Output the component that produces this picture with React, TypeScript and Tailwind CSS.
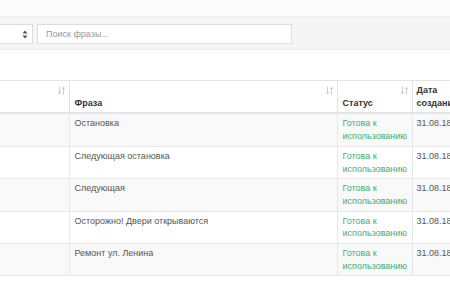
const phrases = [
  "Остановка",
  "Следующая остановка",
  "Следующая",
  "Осторожно! Двери открываются",
  "Ремонт ул. Ленина",
]

const SortIcon = () => (
  <svg width="7" height="9" viewBox="0 0 7 9" className="absolute right-[4px] top-[5px]">
    <path d="M1.5 0.5v7M0 6l1.5 2 1.5-2" stroke="#cfcfcf" strokeWidth="1" fill="none" />
    <path d="M5.5 8.5v-7M4 3l1.5-2 1.5 2" stroke="#cfcfcf" strokeWidth="1" fill="none" />
  </svg>
)

const App = () => {
  return (
    <div
      className="w-[450px] h-[300px] overflow-hidden bg-white text-[9px] leading-[12.7px] text-[#555]"
      style={{ fontFamily: "'Liberation Sans', Arial, sans-serif" }}
    >
      <div className="h-[17px] bg-[#fbfbfb] border-b border-[#eeeeee]" />
      <div className="h-[33px] bg-[#f5f5f5] border-b border-[#ebebeb] flex items-start pt-[7px] gap-[4px]">
        <div className="w-[33px] h-[20px] bg-white border border-[#dddddd] border-l-0 flex items-center justify-end pr-[4px]">
          <svg width="6" height="9" viewBox="0 0 6 9">
            <path d="M3 0.5L5.5 3.5H0.5Z M3 8.5L5.5 5.5H0.5Z" fill="#555" />
          </svg>
        </div>
        <div className="w-[255px] h-[20px] bg-white border border-[#dddddd] flex items-center pl-[8px] text-[#999]">
          Поиск фразы...
        </div>
      </div>

      <div className="h-[30px]" />

      <div className="w-[450px] overflow-hidden">
        <table className="table-fixed border-collapse w-[470px]">
          <colgroup>
            <col className="w-[69px]" />
            <col className="w-[268px]" />
            <col className="w-[75px]" />
            <col className="w-[58px]" />
          </colgroup>
          <thead>
            <tr className="text-[#333] font-bold text-left align-bottom">
              <th className="relative border-t border-r border-b-2 border-[#e3e3e3] px-[5px] pt-[3px] pb-[3px]">
                <SortIcon />
              </th>
              <th className="relative border-t border-x border-b-2 border-[#e3e3e3] px-[5px] pt-[3px] pb-[3px]">
                Фраза
                <SortIcon />
              </th>
              <th className="relative border-t border-x border-b-2 border-[#e3e3e3] px-[5px] pt-[3px] pb-[3px]">
                Статус
                <SortIcon />
              </th>
              <th className="relative border-t border-x border-b-2 border-[#e3e3e3] px-[4px] pt-[3px] pb-[3px]">
                Дата создания
              </th>
            </tr>
          </thead>
          <tbody>
            {phrases.map((p, i) => (
              <tr key={p} className={i % 2 === 0 ? "bg-[#f9f9f9] align-top" : "bg-white align-top"}>
                <td className="border-t border-r border-[#e8e8e8] px-[5px] py-[3px]" />
                <td className="border-t border-x border-[#e8e8e8] px-[5px] py-[3px]">{p}</td>
                <td className="border-t border-x border-[#e8e8e8] px-[5px] py-[3px] text-[#3fae6c]">
                  Готова к использованию
                </td>
                <td className="border-t border-x border-[#e8e8e8] px-[4px] py-[3px] whitespace-nowrap overflow-hidden">
                  31.08.18 15:32
                </td>
              </tr>
            ))}
            <tr>
              <td colSpan={4} className="border-t border-[#e8e8e8]" />
            </tr>
          </tbody>
        </table>
      </div>
    </div>
  )
}

export default App
